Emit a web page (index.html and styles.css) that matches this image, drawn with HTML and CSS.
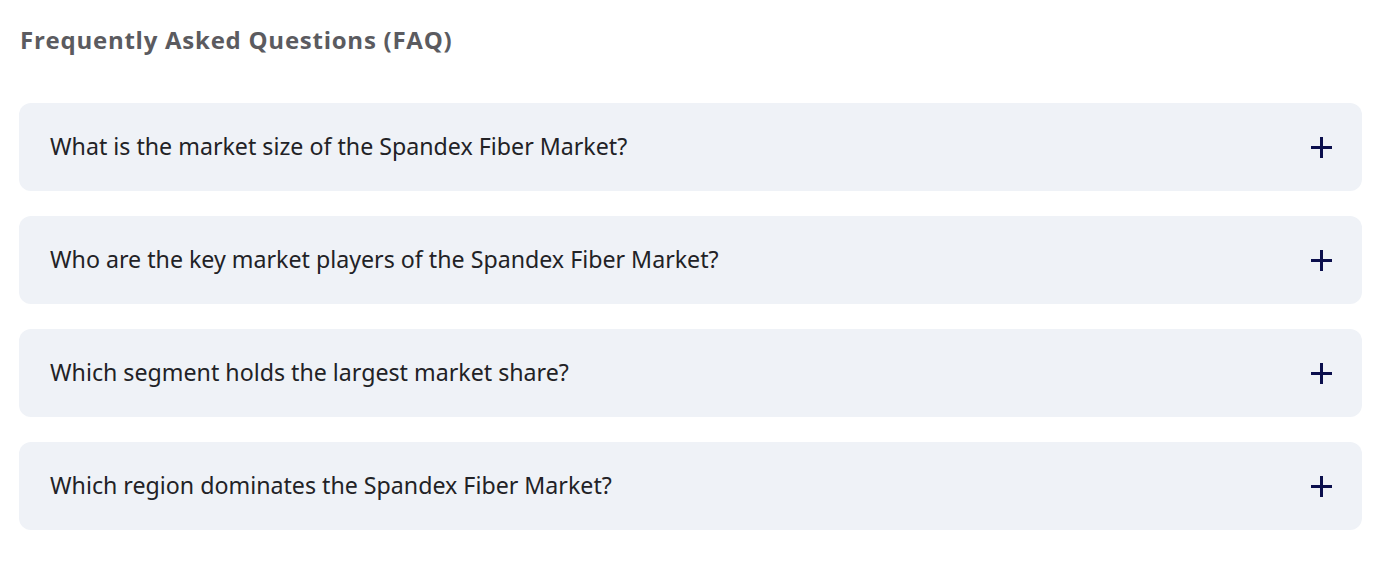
FILE: index.html
```html
<!DOCTYPE html>
<html lang="en">
<head>
<meta charset="utf-8">
<title>FAQ</title>
<link rel="stylesheet" href="styles.css">
</head>
<body>
<section class="faq">
  <h2 class="faq-title">Frequently Asked Questions (FAQ)</h2>
  <div class="faq-list">
    <div class="faq-item">
      <span class="faq-q">What is the market size of the Spandex Fiber Market?</span>
      <svg class="faq-icon" viewBox="0 0 21 21" width="21" height="21"><path d="M10.5 0V21M0 10.5H21" stroke="#0b0f4d" stroke-width="3" fill="none"/></svg>
    </div>
    <div class="faq-item">
      <span class="faq-q">Who are the key market players of the Spandex Fiber Market?</span>
      <svg class="faq-icon" viewBox="0 0 21 21" width="21" height="21"><path d="M10.5 0V21M0 10.5H21" stroke="#0b0f4d" stroke-width="3" fill="none"/></svg>
    </div>
    <div class="faq-item">
      <span class="faq-q">Which segment holds the largest market share?</span>
      <svg class="faq-icon" viewBox="0 0 21 21" width="21" height="21"><path d="M10.5 0V21M0 10.5H21" stroke="#0b0f4d" stroke-width="3" fill="none"/></svg>
    </div>
    <div class="faq-item">
      <span class="faq-q">Which region dominates the Spandex Fiber Market?</span>
      <svg class="faq-icon" viewBox="0 0 21 21" width="21" height="21"><path d="M10.5 0V21M0 10.5H21" stroke="#0b0f4d" stroke-width="3" fill="none"/></svg>
    </div>
  </div>
</section>
</body>
</html>
```
FILE: styles.css
```css
html, body {
  margin: 0;
  padding: 0;
  background: #ffffff;
}
.faq {
  padding: 23px 22px 0 19px;
}
.faq-title {
  margin: 0 0 0 1px;
  font-family: "Open Sans", "Liberation Sans", sans-serif;
  font-weight: 700;
  font-size: 24px;
  line-height: 33px;
  letter-spacing: 0.75px;
  color: #5b5b60;
}
.faq-list {
  margin-top: 47px;
  display: flex;
  flex-direction: column;
  gap: 25px;
}
.faq-item {
  height: 88px;
  box-sizing: border-box;
  background: #eff2f7;
  border-radius: 12px;
  display: flex;
  align-items: center;
  justify-content: space-between;
  padding: 0 30px 2px 31px;
}
.faq-q {
  font-family: "Noto Sans", "DejaVu Sans", sans-serif;
  font-size: 23.2px;
  color: #222226;
}
.faq-icon {
  flex: none;
  margin-top: 2px;
}
```
